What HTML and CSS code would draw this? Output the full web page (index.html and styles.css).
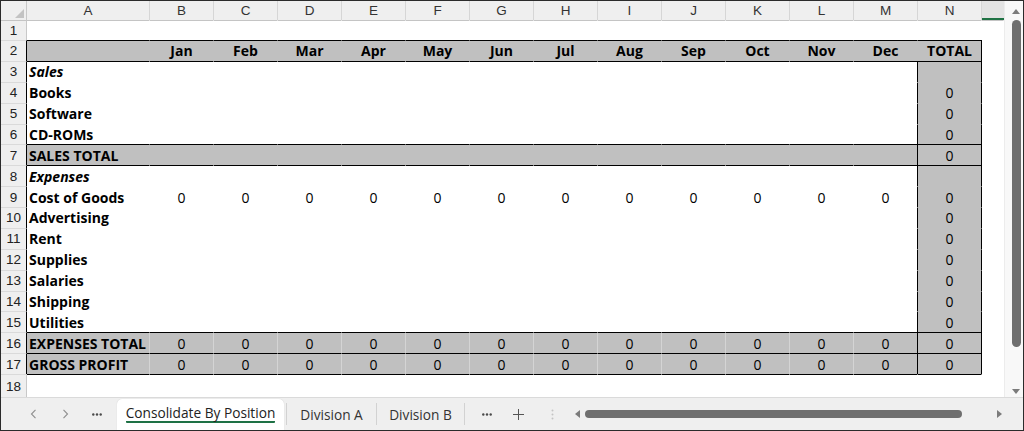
FILE: index.html
```html
<!DOCTYPE html>
<html lang="en">
<head>
<meta charset="utf-8">
<title>Consolidate By Position</title>
<link rel="stylesheet" href="styles.css">
</head>
<body>
<div class="app">
  <div class="main">
    <div class="sheet">
      <div class="hdr">
        <div class="corner"><span class="tri"></span></div>
        <div>A</div><div>B</div><div>C</div><div>D</div><div>E</div><div>F</div><div>G</div><div>H</div><div>I</div><div>J</div><div>K</div><div>L</div><div>M</div><div>N</div>
        <div class="sel"></div>
      </div>

      <div class="row first"><div class="rh">1</div><div class="c a"></div><div class="c"></div><div class="c"></div><div class="c"></div><div class="c"></div><div class="c"></div><div class="c"></div><div class="c"></div><div class="c"></div><div class="c"></div><div class="c"></div><div class="c"></div><div class="c m"></div><div class="c n"></div><div class="c o"></div></div>

      <div class="row band plain in"><div class="rh">2</div><div class="c a"></div><div class="c b">Jan</div><div class="c b">Feb</div><div class="c b">Mar</div><div class="c b">Apr</div><div class="c b">May</div><div class="c b">Jun</div><div class="c b">Jul</div><div class="c b">Aug</div><div class="c b">Sep</div><div class="c b">Oct</div><div class="c b">Nov</div><div class="c m b">Dec</div><div class="c n b">TOTAL</div><div class="c o"></div></div>

      <div class="row tl in body"><div class="rh">3</div><div class="c a i">Sales</div><div class="c"></div><div class="c"></div><div class="c"></div><div class="c"></div><div class="c"></div><div class="c"></div><div class="c"></div><div class="c"></div><div class="c"></div><div class="c"></div><div class="c"></div><div class="c m"></div><div class="c n"></div><div class="c o"></div></div>

      <div class="row in body"><div class="rh">4</div><div class="c a">Books</div><div class="c"></div><div class="c"></div><div class="c"></div><div class="c"></div><div class="c"></div><div class="c"></div><div class="c"></div><div class="c"></div><div class="c"></div><div class="c"></div><div class="c"></div><div class="c m"></div><div class="c n">0</div><div class="c o"></div></div>

      <div class="row in body"><div class="rh">5</div><div class="c a">Software</div><div class="c"></div><div class="c"></div><div class="c"></div><div class="c"></div><div class="c"></div><div class="c"></div><div class="c"></div><div class="c"></div><div class="c"></div><div class="c"></div><div class="c"></div><div class="c m"></div><div class="c n">0</div><div class="c o"></div></div>

      <div class="row in body"><div class="rh">6</div><div class="c a">CD-ROMs</div><div class="c"></div><div class="c"></div><div class="c"></div><div class="c"></div><div class="c"></div><div class="c"></div><div class="c"></div><div class="c"></div><div class="c"></div><div class="c"></div><div class="c"></div><div class="c m"></div><div class="c n">0</div><div class="c o"></div></div>

      <div class="row band plain in body"><div class="rh">7</div><div class="c a">SALES TOTAL</div><div class="c"></div><div class="c"></div><div class="c"></div><div class="c"></div><div class="c"></div><div class="c"></div><div class="c"></div><div class="c"></div><div class="c"></div><div class="c"></div><div class="c"></div><div class="c m"></div><div class="c n">0</div><div class="c o"></div></div>

      <div class="row tl in body"><div class="rh">8</div><div class="c a i">Expenses</div><div class="c"></div><div class="c"></div><div class="c"></div><div class="c"></div><div class="c"></div><div class="c"></div><div class="c"></div><div class="c"></div><div class="c"></div><div class="c"></div><div class="c"></div><div class="c m"></div><div class="c n"></div><div class="c o"></div></div>

      <div class="row in body"><div class="rh">9</div><div class="c a">Cost of Goods</div><div class="c">0</div><div class="c">0</div><div class="c">0</div><div class="c">0</div><div class="c">0</div><div class="c">0</div><div class="c">0</div><div class="c">0</div><div class="c">0</div><div class="c">0</div><div class="c">0</div><div class="c m">0</div><div class="c n">0</div><div class="c o"></div></div>

      <div class="row in body"><div class="rh">10</div><div class="c a">Advertising</div><div class="c"></div><div class="c"></div><div class="c"></div><div class="c"></div><div class="c"></div><div class="c"></div><div class="c"></div><div class="c"></div><div class="c"></div><div class="c"></div><div class="c"></div><div class="c m"></div><div class="c n">0</div><div class="c o"></div></div>

      <div class="row in body"><div class="rh">11</div><div class="c a">Rent</div><div class="c"></div><div class="c"></div><div class="c"></div><div class="c"></div><div class="c"></div><div class="c"></div><div class="c"></div><div class="c"></div><div class="c"></div><div class="c"></div><div class="c"></div><div class="c m"></div><div class="c n">0</div><div class="c o"></div></div>

      <div class="row in body"><div class="rh">12</div><div class="c a">Supplies</div><div class="c"></div><div class="c"></div><div class="c"></div><div class="c"></div><div class="c"></div><div class="c"></div><div class="c"></div><div class="c"></div><div class="c"></div><div class="c"></div><div class="c"></div><div class="c m"></div><div class="c n">0</div><div class="c o"></div></div>

      <div class="row in body"><div class="rh">13</div><div class="c a">Salaries</div><div class="c"></div><div class="c"></div><div class="c"></div><div class="c"></div><div class="c"></div><div class="c"></div><div class="c"></div><div class="c"></div><div class="c"></div><div class="c"></div><div class="c"></div><div class="c m"></div><div class="c n">0</div><div class="c o"></div></div>

      <div class="row in body"><div class="rh">14</div><div class="c a">Shipping</div><div class="c"></div><div class="c"></div><div class="c"></div><div class="c"></div><div class="c"></div><div class="c"></div><div class="c"></div><div class="c"></div><div class="c"></div><div class="c"></div><div class="c"></div><div class="c m"></div><div class="c n">0</div><div class="c o"></div></div>

      <div class="row in body"><div class="rh">15</div><div class="c a">Utilities</div><div class="c"></div><div class="c"></div><div class="c"></div><div class="c"></div><div class="c"></div><div class="c"></div><div class="c"></div><div class="c"></div><div class="c"></div><div class="c"></div><div class="c"></div><div class="c m"></div><div class="c n">0</div><div class="c o"></div></div>

      <div class="row band in body"><div class="rh">16</div><div class="c a">EXPENSES TOTAL</div><div class="c">0</div><div class="c">0</div><div class="c">0</div><div class="c">0</div><div class="c">0</div><div class="c">0</div><div class="c">0</div><div class="c">0</div><div class="c">0</div><div class="c">0</div><div class="c">0</div><div class="c m">0</div><div class="c n">0</div><div class="c o"></div></div>

      <div class="row band in body"><div class="rh">17</div><div class="c a">GROSS PROFIT</div><div class="c">0</div><div class="c">0</div><div class="c">0</div><div class="c">0</div><div class="c">0</div><div class="c">0</div><div class="c">0</div><div class="c">0</div><div class="c">0</div><div class="c">0</div><div class="c">0</div><div class="c m">0</div><div class="c n">0</div><div class="c o"></div></div>

      <div class="row tl last"><div class="rh">18</div><div class="c a"></div><div class="c"></div><div class="c"></div><div class="c"></div><div class="c"></div><div class="c"></div><div class="c"></div><div class="c"></div><div class="c"></div><div class="c"></div><div class="c"></div><div class="c"></div><div class="c m"></div><div class="c n"></div><div class="c o"></div></div>
    </div>

    <div class="vscroll">
      <span class="arr-up"></span>
      <span class="vthumb"></span>
      <span class="arr-down"></span>
    </div>
  </div>

  <div class="tabbar">
    <div class="nav"><svg width="7" height="10" viewBox="0 0 7 10"><path d="M5.5 0.8 L1.5 5 L5.5 9.2" fill="none" stroke="#8e8e8e" stroke-width="1.1"/></svg></div>
    <div class="nav"><svg width="7" height="10" viewBox="0 0 7 10"><path d="M1.5 0.8 L5.5 5 L1.5 9.2" fill="none" stroke="#8e8e8e" stroke-width="1.1"/></svg></div>
    <div class="nav"><svg width="10" height="3" viewBox="0 0 10 3"><circle cx="1.3" cy="1.5" r="1.2" fill="#4a4a4a"/><circle cx="5" cy="1.5" r="1.2" fill="#4a4a4a"/><circle cx="8.7" cy="1.5" r="1.2" fill="#4a4a4a"/></svg></div>
    <div class="tab active"><span class="label">Consolidate By Position</span></div>
    <span class="sep"></span>
    <div class="tab wa">Division A</div>
    <span class="sep"></span>
    <div class="tab wb">Division B</div>
    <span class="sep"></span>
    <div class="btn more"><svg width="10" height="3" viewBox="0 0 10 3"><circle cx="1.3" cy="1.5" r="1.2" fill="#4a4a4a"/><circle cx="5" cy="1.5" r="1.2" fill="#4a4a4a"/><circle cx="8.7" cy="1.5" r="1.2" fill="#4a4a4a"/></svg></div>
    <div class="btn plus"><svg width="11" height="11" viewBox="0 0 11 11"><path d="M5.5 0 V11 M0 5.5 H11" stroke="#555" stroke-width="1"/></svg></div>
    <div class="btn vdots"><svg width="3" height="11" viewBox="0 0 3 11"><circle cx="1.5" cy="1.5" r="1" fill="#c4c4c4"/><circle cx="1.5" cy="5.5" r="1" fill="#c4c4c4"/><circle cx="1.5" cy="9.5" r="1" fill="#c4c4c4"/></svg></div>
    <div class="hscroll">
      <span class="arr-left"></span>
      <span class="hthumb"></span>
      <span class="arr-right"></span>
    </div>
  </div>
</div>
</body>
</html>
```
FILE: styles.css
```css
html, body {
  margin: 0;
  padding: 0;
  background: #fff;
}

.app {
  width: 1024px;
  height: 431px;
  box-sizing: border-box;
  border: 1px solid #2b2b2b;
  display: flex;
  flex-direction: column;
  overflow: hidden;
  background: #fff;
}

.main {
  display: flex;
  height: 396px;
  flex: none;
}

.sheet {
  width: 1003px;
  display: flex;
  flex-direction: column;
}

.hdr,
.row {
  display: grid;
  grid-template-columns: 26px 123px repeat(13, 64px) 22px;
}

.hdr {
  height: 19px;
  flex: none;
}

.hdr > div {
  box-sizing: border-box;
  background: #efefef;
  border-right: 1px solid #d6d6d6;
  display: flex;
  align-items: center;
  justify-content: center;
  font: 13.5px "Liberation Sans", Arial, sans-serif;
  color: #333;
}

.hdr > .corner {
  justify-content: flex-end;
  align-items: flex-end;
  padding: 0 2px 2px 0;
  border-right-color: #c8c8c8;
}

.tri {
  width: 0;
  height: 0;
  border-left: 9px solid transparent;
  border-bottom: 9px solid #c3c3c3;
}

.hdr > .sel {
  background: #e3e3e3;
  border-right: none;
  box-shadow: inset 0 -2px 0 #1f7244;
}

.row {
  height: 20.875px;
  flex: none;
}

.row.first {
  height: 20px;
}

.row.last {
  flex: 1 1 auto;
  height: auto;
}

.row > div {
  box-sizing: border-box;
  border-top: 1px solid transparent;
  border-right: 1px solid transparent;
}

.row > .rh {
  background: #efefef;
  border-top-color: #dadada;
  border-right-color: #c8c8c8;
  display: flex;
  align-items: center;
  justify-content: center;
  font: 13.5px "Liberation Sans", Arial, sans-serif;
  color: #222;
}

.row.first > div {
  border-top-color: #c4c4c4;
}

.c {
  display: flex;
  align-items: center;
  justify-content: center;
  font: 14px "Open Sans", "Liberation Sans", sans-serif;
  color: #000;
  white-space: nowrap;
  overflow: hidden;
}

.c.a {
  justify-content: flex-start;
  padding-left: 2px;
  font-weight: 700;
}

.b {
  font-weight: 700;
}

.i {
  font-style: italic;
}

/* filled (gray) rows */
.row.band > .c:not(.o) {
  background: #c0c0c0;
  border-top-color: #000;
  border-right-color: #d4d4d4;
}

.row.band.plain > .c:not(.o) {
  border-right-color: #c0c0c0;
}

/* black line under a filled row */
.row.tl > .c:not(.o) {
  border-top-color: #000;
}

/* outline of the table */
.row.in > .rh {
  border-right-color: #000;
}

.row.body > .c.n {
  background: #c0c0c0;
}

.row.body > .c.m.m {
  border-right-color: #000;
}

.row.in > .c.n.n {
  border-right-color: #000;
}

/* vertical scrollbar */
.vscroll {
  width: 19px;
  box-sizing: border-box;
  background: #f8f8f8;
  border-left: 1px solid #ececec;
  display: flex;
  flex-direction: column;
  align-items: center;
  padding: 8px 0 3px 4px;
}

.arr-up {
  width: 0;
  height: 0;
  border-left: 4px solid transparent;
  border-right: 4px solid transparent;
  border-bottom: 5px solid #7b7b7b;
}

.vthumb {
  width: 9px;
  height: 327px;
  margin-top: 6px;
  border-radius: 5px;
  background: #6f6f6f;
}

.arr-down {
  margin-top: auto;
  width: 0;
  height: 0;
  border-left: 4px solid transparent;
  border-right: 4px solid transparent;
  border-top: 5px solid #7b7b7b;
}

/* sheet tabs */
.tabbar {
  flex: 1;
  display: flex;
  align-items: center;
  background: #efefef;
  border-top: 1px solid #dadada;
  padding-left: 16px;
  box-sizing: border-box;
  font: 13.7px "Open Sans", "Liberation Sans", sans-serif;
}

.nav {
  width: 32px;
  height: 24px;
  display: flex;
  align-items: center;
  justify-content: center;
  flex: none;
}

.tab {
  display: flex;
  justify-content: center;
  align-items: center;
  flex: none;
  color: #333;
  white-space: nowrap;
}

.tab.active {
  align-self: flex-end;
  width: 167px;
  height: 31px;
  margin-left: 4px;
  box-sizing: border-box;
  padding-top: 5px;
  align-items: flex-start;
  background: #fff;
  border-radius: 5px 5px 0 0;
  box-shadow: 0 0 1px rgba(0, 0, 0, 0.18);
  color: #222;
}

.label {
  line-height: 17px;
  border-bottom: 2px solid #1e7145;
  border-radius: 1px;
}

.tab.wa {
  width: 89px;
}

.tab.wb {
  width: 87px;
}

.sep {
  width: 1px;
  height: 22px;
  background: #d2d2d2;
  flex: none;
}

.tab.active + .sep {
  margin-left: 2px;
}

.btn {
  height: 24px;
  display: flex;
  align-items: center;
  justify-content: center;
  flex: none;
}

.btn.more {
  width: 32px;
  margin-left: 6px;
}

.btn.plus {
  width: 30px;
}

.btn.vdots {
  width: 38px;
}

.hscroll {
  flex: 1;
  display: flex;
  align-items: center;
  padding-left: 4px;
}

.arr-left {
  width: 0;
  height: 0;
  border-top: 4px solid transparent;
  border-bottom: 4px solid transparent;
  border-right: 5px solid #7b7b7b;
}

.hthumb {
  width: 377px;
  height: 8px;
  margin-left: 5px;
  border-radius: 4px;
  background: #6f6f6f;
}

.arr-right {
  margin-left: auto;
  margin-right: 21px;
  width: 0;
  height: 0;
  border-top: 4px solid transparent;
  border-bottom: 4px solid transparent;
  border-left: 5px solid #7b7b7b;
}
```
